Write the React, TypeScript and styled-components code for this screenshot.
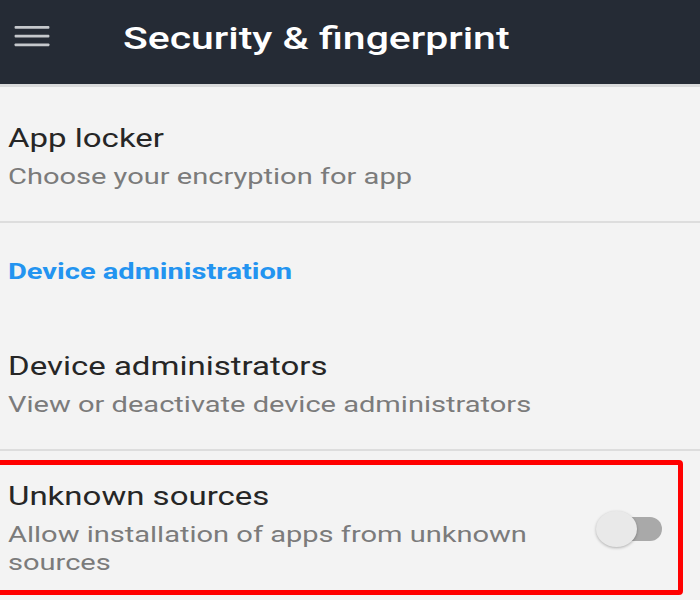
import React from "react";
import styled, { createGlobalStyle, css } from "styled-components";

const GlobalStyle = createGlobalStyle`
  html, body {
    margin: 0;
    padding: 0;
    background: #f3f3f3;
    font-family: Roboto, "Liberation Sans", sans-serif;
  }
`;

// the screenshot is stretched sideways, so every label is widened the same way
const stretched = css`
  display: inline-block;
  align-self: flex-start;
  white-space: nowrap;
  transform: scaleX(1.32);
  transform-origin: left center;
`;

export default function App() {
  return (
    <>
      <GlobalStyle />
      <Screen>
        <Toolbar>
          <MenuIcon viewBox="0 0 38 24">
            <rect x="0" y="0" width="38" height="3" rx="1" />
            <rect x="0" y="9.5" width="38" height="3" rx="1" />
            <rect x="0" y="19" width="38" height="3" rx="1" />
          </MenuIcon>
          <ToolbarTitle>Security &amp; fingerprint</ToolbarTitle>
        </Toolbar>
        <List>
          <Row>
            <RowText>
              <RowTitle>App locker</RowTitle>
              <RowSummary>Choose your encryption for app</RowSummary>
            </RowText>
          </Row>
          <Divider />
          <CategoryRow>
            <Category>Device administration</Category>
          </CategoryRow>
          <Row>
            <RowText>
              <RowTitle>Device administrators</RowTitle>
              <RowSummary>View or deactivate device administrators</RowSummary>
            </RowText>
          </Row>
          <Divider />
          <Highlight>
            <SwitchRow>
              <RowText>
                <RowTitle>Unknown sources</RowTitle>
                <RowSummary>
                  Allow installation of apps from unknown
                  <br />
                  sources
                </RowSummary>
              </RowText>
              <Switch>
                <SwitchTrack />
                <SwitchThumb />
              </Switch>
            </SwitchRow>
          </Highlight>
        </List>
      </Screen>
    </>
  );
}

const Screen = styled.div`
  width: 700px;
  height: 600px;
  overflow: hidden;
  background: #f3f3f3;
`;

const Toolbar = styled.header`
  height: 84px;
  background: #252b35;
  border-bottom: 3px solid #d9dadb;
  display: flex;
  align-items: flex-start;
  padding-left: 13px;
`;

const MenuIcon = styled.svg`
  width: 38px;
  height: 22px;
  margin-top: 26px;
  fill: #c5c8cc;
  flex-shrink: 0;
`;

const ToolbarTitle = styled.h1`
  ${stretched};
  margin: 21px 0 0 72px;
  color: #ffffff;
  font-size: 31px;
  line-height: 36px;
  font-weight: 500;
`;

const List = styled.div`
  display: flex;
  flex-direction: column;
`;

const Row = styled.div`
  display: flex;
  align-items: center;
  padding: 36px 8px 30px;
`;

const RowText = styled.div`
  flex: 1;
  display: flex;
  flex-direction: column;
`;

const RowTitle = styled.div`
  ${stretched};
  font-size: 25px;
  line-height: 32px;
  color: #262626;
`;

const RowSummary = styled.div`
  ${stretched};
  font-size: 22px;
  line-height: 28px;
  color: #7b7b7b;
  margin-top: 8px;
`;

const Divider = styled.div`
  height: 2px;
  background: #dddddd;
`;

const CategoryRow = styled.div`
  display: flex;
  padding: 35px 8px 29px;
`;

const Category = styled.div`
  ${stretched};
  font-size: 22px;
  font-weight: 700;
  color: #2394f0;
  line-height: 28px;
`;

const Highlight = styled.div`
  margin: 9px 0 0 -8px;
  width: 691px;
  box-sizing: border-box;
  border: 5px solid #ff0000;
  border-radius: 4px;
`;

const SwitchRow = styled.div`
  display: flex;
  align-items: center;
  padding: 16px 16px 13px 11px;
`;

const Switch = styled.div`
  position: relative;
  width: 66px;
  height: 36px;
  flex-shrink: 0;
`;

const SwitchTrack = styled.div`
  position: absolute;
  right: 0;
  top: 6px;
  width: 44px;
  height: 24px;
  border-radius: 12px;
  background: #a9a9a9;
`;

const SwitchThumb = styled.div`
  position: absolute;
  left: 0;
  top: 0;
  width: 41px;
  height: 36px;
  border-radius: 50%;
  background: #e9e9e9;
  box-shadow: 0 1px 3px rgba(0, 0, 0, 0.28);
`;
